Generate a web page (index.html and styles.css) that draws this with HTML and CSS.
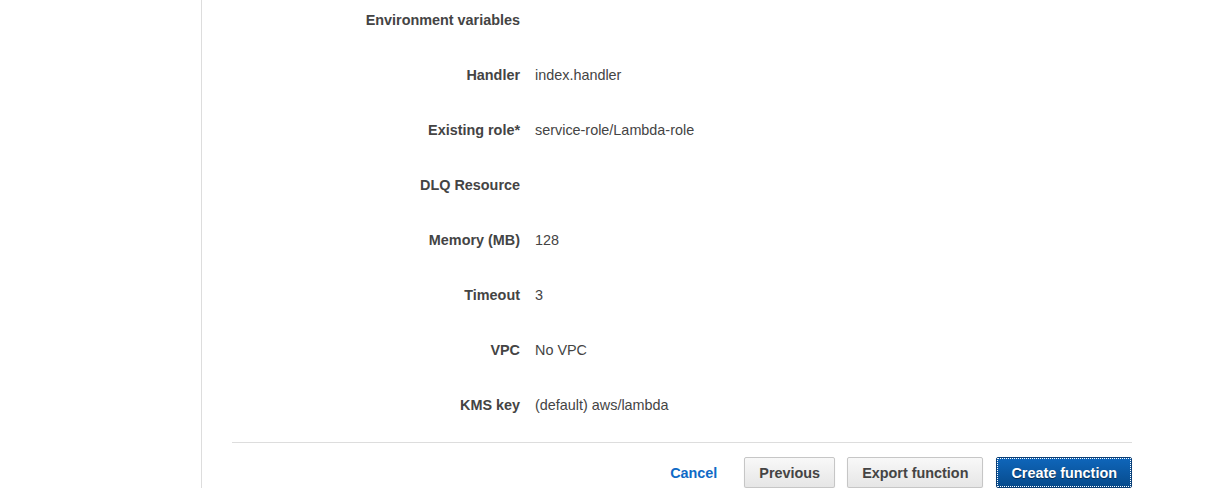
FILE: index.html
```html
<!DOCTYPE html>
<html lang="en">
<head>
    <meta charset="UTF-8">
    <title>Review</title>
    <link rel="stylesheet" href="styles.css">
</head>
<body>
<div class="page">
    <div class="side"></div>
    <div class="main">
        <div class="rows">
            <div class="row"><div class="label">Environment variables</div><div class="value"></div></div>
            <div class="row"><div class="label">Handler</div><div class="value">index.handler</div></div>
            <div class="row"><div class="label">Existing role*</div><div class="value">service-role/Lambda-role</div></div>
            <div class="row"><div class="label">DLQ Resource</div><div class="value"></div></div>
            <div class="row"><div class="label">Memory (MB)</div><div class="value">128</div></div>
            <div class="row"><div class="label">Timeout</div><div class="value">3</div></div>
            <div class="row"><div class="label">VPC</div><div class="value">No VPC</div></div>
            <div class="row"><div class="label">KMS key</div><div class="value">(default) aws/lambda</div></div>
        </div>
        <div class="actions">
            <a class="cancel" href="#">Cancel</a>
            <button class="btn">Previous</button>
            <button class="btn">Export function</button>
            <button class="btn primary">Create function</button>
        </div>
    </div>
</div>
</body>
</html>
```

FILE: styles.css
```css
* {
    padding: 0;
    margin: 0;
    box-sizing: border-box;
}
body {
    font-family: "Liberation Sans", Arial, sans-serif;
    font-size: 14.4px;
    color: #444;
    background: #fff;
}
.page {
    display: flex;
    height: 488px;
}
.side {
    width: 202px;
    border-right: 1px solid #ddd;
}
.main {
    width: 900px;
    margin-left: 30px;
}
.rows {
    display: flex;
    flex-direction: column;
    gap: 35px;
    padding-top: 10px;
}
.row {
    display: flex;
    line-height: 20px;
    height: 20px;
}
.label {
    width: 288px;
    text-align: right;
    font-weight: bold;
}
.value {
    margin-left: 15px;
}
.actions {
    margin-top: 27px;
    border-top: 1px solid #ddd;
    padding-top: 14px;
    display: flex;
    justify-content: flex-end;
    align-items: center;
    gap: 12px;
}
.cancel {
    color: #0f6ac6;
    font-weight: bold;
    text-decoration: none;
    margin-right: 15px;
}
.btn {
    font-family: inherit;
    font-size: 14.4px;
    font-weight: bold;
    color: #444;
    height: 31px;
    padding: 0 14px;
    border: 1px solid #c6c6c6;
    border-radius: 2px;
    background: linear-gradient(#f8f8f8, #e6e6e6);
    box-shadow: 0 1px 1px rgba(0,0,0,0.12);
}
.btn.primary {
    color: #fff;
    border: 1px solid #0a3d73;
    background: linear-gradient(#0f66bb, #074b8c);
    text-shadow: 0 1px 1px rgba(0,0,0,0.5);
    outline: 1px dotted #fff;
    outline-offset: -2px;
    margin-left: 1px;
}
```
